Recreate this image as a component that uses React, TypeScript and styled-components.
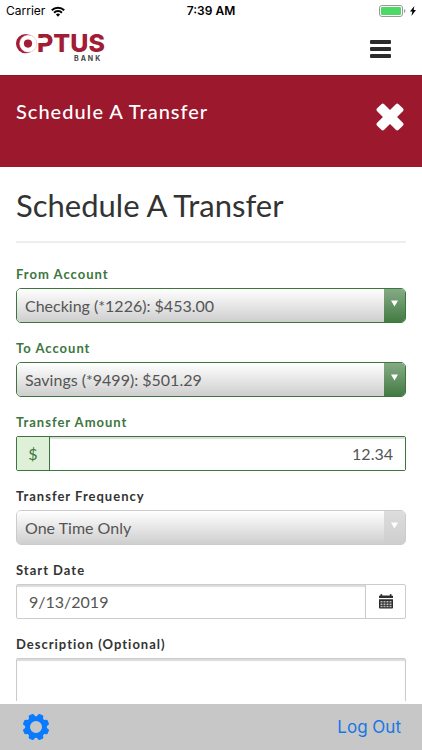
import React from "react";
import styled, { createGlobalStyle, css } from "styled-components";

const GlobalStyle = createGlobalStyle`
  *, *::before, *::after { box-sizing: border-box; }
  body { margin: 0; background: #fff; color: #333; font-family: Lato, "Open Sans", sans-serif; }
  button, input, select, textarea { font: inherit; margin: 0; }
`;

const green = "#3c763d";
const system = `Inter, Roboto, "Liberation Sans", sans-serif`;

const Screen = styled.div`
  height: 100vh;
  display: flex;
  flex-direction: column;
  overflow: hidden;
`;

const StatusBar = styled.div`
  flex: none;
  height: 22px;
  padding: 0 6px;
  display: grid;
  grid-template-columns: 1fr auto 1fr;
  align-items: center;
  font-family: ${system};
  font-size: 12px;
  line-height: 22px;
  color: #000;
`;

const StatusLeft = styled.div`
  display: flex;
  align-items: center;
  gap: 6px;
`;

const Clock = styled.time`
  font-weight: 600;
`;

const StatusRight = styled.div`
  display: flex;
  align-items: center;
  justify-content: flex-end;
  gap: 4px;
`;

const Header = styled.header`
  flex: none;
  height: 53px;
  padding: 0 31px 0 15px;
  display: flex;
  align-items: center;
  justify-content: space-between;
`;

const IconButton = styled.button`
  display: flex;
  padding: 0;
  border: 0;
  background: none;
  color: inherit;
  cursor: pointer;
`;

const Banner = styled.div`
  flex: none;
  height: 92px;
  padding: 23px 18px 0 16px;
  display: flex;
  justify-content: space-between;
  align-items: flex-start;
  background: #9b182d;
  border-top: 1px solid #82182a;
  color: #fff;
`;

const BannerTitle = styled.div`
  font-size: 20px;
  font-weight: 500;
  line-height: 24px;
  letter-spacing: 1px;
`;

const CloseButton = styled(IconButton)`
  padding-top: 4px;
`;

const Content = styled.main`
  flex: 1;
  min-height: 0;
  margin-bottom: 3px;
  padding: 18px 16px 0;
  overflow: hidden;
`;

const PageTitle = styled.h1`
  margin: 0;
  padding-bottom: 16px;
  border-bottom: 2px solid #eee;
  font-size: 31px;
  font-weight: 400;
  line-height: 40px;
`;

const Form = styled.form`
  padding-top: 21px;
`;

const Field = styled.div`
  display: flex;
  flex-direction: column;
  padding-bottom: 15px;
`;

const Label = styled.label<{ $valid?: boolean }>`
  padding-bottom: 4px;
  font-size: 13px;
  font-weight: 700;
  line-height: 20px;
  letter-spacing: 1px;
  color: ${(p) => (p.$valid ? green : "#333")};
`;

const SelectBox = styled.div<{ $disabled?: boolean }>`
  position: relative;
  display: flex;
  height: 35px;
  border: 1px solid ${(p) => (p.$disabled ? "#ccc" : green)};
  border-radius: 5px;
  overflow: hidden;
`;

const SelectInput = styled.select`
  flex: 1;
  min-width: 0;
  padding: 0 30px 0 8px;
  border: 0;
  appearance: none;
  background: linear-gradient(#fff, #cecece);
  color: #555;
  opacity: 1;
  font-size: 16px;
  outline: none;
`;

const SelectArrow = styled.span<{ $disabled?: boolean }>`
  position: absolute;
  top: 0;
  right: 0;
  bottom: 0;
  width: 21px;
  display: flex;
  justify-content: center;
  padding-top: 11px;
  pointer-events: none;
  background: ${(p) =>
    p.$disabled ? "linear-gradient(#ddd, #cecece)" : "linear-gradient(#86ab86, #437a43)"};
`;

const Group = styled.div<{ $valid?: boolean }>`
  display: flex;
  height: 35px;
  border: 1px solid ${(p) => (p.$valid ? green : "#ccc")};
  border-radius: 2px;
`;

const innerShadow = css`
  box-shadow: inset 0 2px 1px rgba(0, 0, 0, 0.14);
`;

const GroupInput = styled.input<{ $end?: boolean }>`
  flex: 1;
  min-width: 0;
  padding: 0 12px;
  border: 0;
  background: #fff;
  color: #555;
  font-size: 16px;
  text-align: ${(p) => (p.$end ? "right" : "left")};
  outline: none;
  ${innerShadow}
`;

const Prefix = styled.span`
  width: 33px;
  display: flex;
  align-items: center;
  justify-content: center;
  border-right: 1px solid ${green};
  background: #dff0d8;
  color: ${green};
  font-size: 16px;
`;

const DateButton = styled(IconButton)`
  width: 40px;
  align-items: center;
  justify-content: center;
  border-left: 1px solid #ccc;
`;

const TextArea = styled.textarea`
  height: 90px;
  padding: 8px 12px;
  border: 1px solid #ccc;
  border-radius: 2px;
  color: #555;
  font-size: 16px;
  resize: none;
  outline: none;
  ${innerShadow}
`;

const Footer = styled.footer`
  flex: none;
  height: 46px;
  padding: 0 21px 0 22px;
  display: flex;
  align-items: center;
  justify-content: space-between;
  background: #c7c7c7;
  color: #0a7aff;
`;

const LogOut = styled.a`
  color: #1677e6;
  font-family: ${system};
  font-size: 17px;
  line-height: 24px;
  text-decoration: none;
`;

const WifiIcon = () => (
  <svg width="14" height="11" viewBox="0 0 14 11" fill="none" stroke="#000" strokeWidth="2" aria-hidden="true">
    <path d="M.8 4.2a8.8 8.8 0 0 1 12.4 0" />
    <path d="M3.1 6.7a5.5 5.5 0 0 1 7.8 0" />
    <path d="M4.9 8.5a3 3 0 0 1 4.2 0L7 10.7z" fill="#000" stroke="none" />
  </svg>
);

const BatteryIcon = () => (
  <svg width="27" height="12" viewBox="0 0 27 12" aria-hidden="true">
    <rect x=".5" y=".5" width="23" height="11" rx="2.5" fill="#fff" stroke="#999" />
    <rect x="2" y="2" width="20" height="8" rx="1.2" fill="#4cd964" />
    <path d="M25 4q1.4.6 1.4 2T25 8z" fill="#999" />
  </svg>
);

const BoltIcon = () => (
  <svg width="6" height="10" viewBox="0 0 6 10" aria-hidden="true">
    <path d="M4.4 0 0 5.6h2.4L1.4 10 6 4H3.6z" fill="#000" />
  </svg>
);

const Logo = () => (
  <svg width="96" height="46" viewBox="0 -8 96 46" role="img" aria-label="Optus Bank">
    <circle cx="10.6" cy="9.6" r="9.6" fill="#a31c35" />
    <circle cx="13.2" cy="9.6" r="8.7" fill="#fff" stroke="#dba3ae" strokeWidth=".5" />
    <circle cx="13" cy="9.6" r="4.1" fill="#a31c35" />
    <text x="22" y="18" fontFamily="Inter, sans-serif" fontSize="25" fontWeight="800" fill="#a31c35">
      PTUS
    </text>
    <rect x="22" y="4" width="6" height="5" fill="#fff" />
    <text x="59" y="26.5" fontFamily="Inter, sans-serif" fontSize="7" fontWeight="700" letterSpacing="2" fill="#444">
      BANK
    </text>
  </svg>
);

const MenuIcon = () => (
  <svg width="21" height="18" viewBox="0 0 21 18" fill="#2b2b2b" aria-hidden="true">
    <rect width="21" height="4" rx="1" />
    <rect y="7" width="21" height="4" rx="1" />
    <rect y="14" width="21" height="4" rx="1" />
  </svg>
);

const CloseIcon = () => (
  <svg width="28" height="28" viewBox="0 0 28 28" fill="#fff" aria-hidden="true">
    <g transform="rotate(45 14 14)">
      <rect x="-1.2" y="9" width="30.4" height="10" rx="2" />
      <rect x="9" y="-1.2" width="10" height="30.4" rx="2" />
    </g>
  </svg>
);

const ArrowIcon = () => (
  <svg width="7" height="7" viewBox="0 0 7 7" fill="#fff" aria-hidden="true">
    <path d="M0 .5h7L3.5 6.5z" />
  </svg>
);

const CalendarIcon = () => (
  <svg width="14" height="15" viewBox="0 0 14 15" aria-hidden="true">
    <path d="M0 1.8h1.4V.8q0-.8.9-.8t.9.8v.7h7.6V.8q0-.8.9-.8t.9.8v1H14V4H0z" fill="#2d2d2d" />
    <path d="M0 5.2h14v8.6q0 .8-.8.8H.8q-.8 0-.8-.8z" fill="#2d2d2d" />
    <path
      d="M1.5 7h2v1.5h-2zM4.5 7h2v1.5h-2zM7.5 7h2v1.5h-2zM10.5 7h2v1.5h-2zM1.5 9.4h2v1.5h-2zM4.5 9.4h2v1.5h-2zM7.5 9.4h2v1.5h-2zM10.5 9.4h2v1.5h-2zM1.5 11.8h2v1.5h-2zM4.5 11.8h2v1.5h-2zM7.5 11.8h2v1.5h-2zM10.5 11.8h2v1.5h-2z"
      fill="#bbb"
    />
  </svg>
);

const GearIcon = () => (
  <svg width="28" height="28" viewBox="-14 -14 28 28" fill="#0a7aff" aria-hidden="true">
    {[22.5, 67.5, 112.5, 157.5, 202.5, 247.5, 292.5, 337.5].map((angle) => (
      <path key={angle} d="M-3.8-8.5-2.8-12.4Q-2.5-13.3-1.6-13.3H1.6Q2.5-13.3 2.8-12.4L3.8-8.5z" transform={`rotate(${angle})`} />
    ))}
    <circle r="8.4" fill="none" stroke="#0a7aff" strokeWidth="4.8" />
  </svg>
);

type SelectFieldProps = { id: string; label: string; value: string; disabled?: boolean };

const SelectField = ({ id, label, value, disabled }: SelectFieldProps) => (
  <Field>
    <Label htmlFor={id} $valid={!disabled}>{label}</Label>
    <SelectBox $disabled={disabled}>
      <SelectInput id={id} disabled={disabled} defaultValue={value}>
        <option value={value}>{value}</option>
      </SelectInput>
      <SelectArrow $disabled={disabled}>
        <ArrowIcon />
      </SelectArrow>
    </SelectBox>
  </Field>
);

export default function App() {
  return (
    <Screen>
      <GlobalStyle />
      <StatusBar>
        <StatusLeft>
          Carrier
          <WifiIcon />
        </StatusLeft>
        <Clock>7:39 AM</Clock>
        <StatusRight>
          <BatteryIcon />
          <BoltIcon />
        </StatusRight>
      </StatusBar>
      <Header>
        <Logo />
        <IconButton type="button" aria-label="Menu">
          <MenuIcon />
        </IconButton>
      </Header>
      <Banner>
        <BannerTitle>Schedule A Transfer</BannerTitle>
        <CloseButton type="button" aria-label="Close">
          <CloseIcon />
        </CloseButton>
      </Banner>
      <Content>
        <PageTitle>Schedule A Transfer</PageTitle>
        <Form>
          <SelectField id="from" label="From Account" value="Checking (*1226): $453.00" />
          <SelectField id="to" label="To Account" value="Savings (*9499): $501.29" />
          <Field>
            <Label htmlFor="amount" $valid>Transfer Amount</Label>
            <Group $valid>
              <Prefix>$</Prefix>
              <GroupInput id="amount" inputMode="decimal" defaultValue="12.34" $end />
            </Group>
          </Field>
          <SelectField id="frequency" label="Transfer Frequency" value="One Time Only" disabled />
          <Field>
            <Label htmlFor="start">Start Date</Label>
            <Group>
              <GroupInput id="start" defaultValue="9/13/2019" />
              <DateButton type="button" aria-label="Choose date">
                <CalendarIcon />
              </DateButton>
            </Group>
          </Field>
          <Field>
            <Label htmlFor="description">Description (Optional)</Label>
            <TextArea id="description" />
          </Field>
        </Form>
      </Content>
      <Footer>
        <IconButton type="button" aria-label="Settings">
          <GearIcon />
        </IconButton>
        <LogOut href="#logout">Log Out</LogOut>
      </Footer>
    </Screen>
  );
}
